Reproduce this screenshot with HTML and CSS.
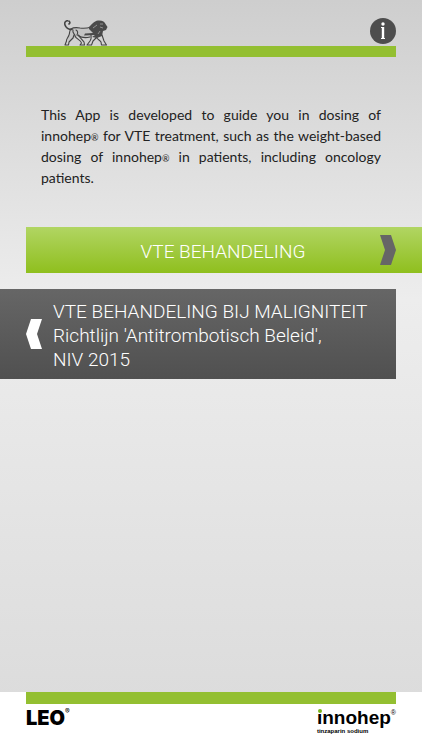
FILE: index.html
```html
<!DOCTYPE html>
<html lang="nl">
<head>
    <meta charset="UTF-8">
    <meta name="viewport" content="width=device-width, initial-scale=1.0">
    <title>innohep</title>
    <link rel="stylesheet" href="styles.css">
</head>
<body>

    <!-- Header -->
    <header class="header">
        <svg class="lion" viewBox="0 0 44 26" aria-hidden="true">
            <path d="M7 9C12 7 20 8.500 26 7L30 14L26 17C21 18 18 17 14 15.500L11 18L5 21L3 20L6 14Z" fill="#c4c4c4"/>
            <g fill="none" stroke="#444" stroke-width="1.100" stroke-linecap="round" stroke-linejoin="round">
                <path d="M8 9.500C5 9.500 2 8 1 5C0 2 2 .5 4 .8C6 1 6.500 3 5 4" stroke-width="1.600"/>
                <path d="M7 9C10 7 13 7.500 16 8C20 8.500 24 8 27 7"/>
                <path d="M7 9C5 11 6 13 5 15C4 18 2 19 2.500 21L1 25H4.500L5 22L9 18L10 15"/>
                <path d="M9 10C8 13 11 14 11 16C12 19 17 20 17.500 23L16 25H20.500L20 22C18 19 15 17 14.500 15"/>
                <path d="M14 15.500C18 18 22 18 26 17M12 10C14 11 14 13 13 15"/>
                <path d="M27 15C27 18 28 18 26 21L23 25H27.500L29 21L33 17"/>
                <path d="M32 17C34 20 36 20 37 22L37.500 25H42.500L40 21L38 15"/>
            </g>
            <path d="M25 7C27 5 30 1 34 .5C38 0 41 2 41.500 4L43.500 7L42 10L39 11L38 16L33 18L28 17L31 15L20 15.500L21 13.500L29 13L25 9Z" fill="#4a4a4a"/>
            <path d="M36 4L39 4M36 7L39 8M29 8L33 5M34 14L36 11" stroke="#a5a5a5" stroke-width=".8" fill="none"/>
        </svg>
        <button class="info" type="button" aria-label="Info">
            <svg viewBox="0 0 26 26" aria-hidden="true">
                <circle cx="13" cy="13" r="13" fill="#4d4d4d"/>
                <circle cx="13" cy="6" r="1.700" fill="#fff"/>
                <path d="M11 9H14.200V20H15V21H11V20H11.800V10H11Z" fill="#fff"/>
            </svg>
        </button>
    </header>

    <main class="content">
        <p class="intro">This App is developed to guide you in dosing of innohep<span class="reg">®</span> for VTE treatment, such as the weight-based dosing of innohep<span class="reg">®</span> in patients, including oncology patients.</p>

        <!-- Menu -->
        <nav class="menu">
            <a class="item item-green" href="#behandeling">
                <span class="label">VTE BEHANDELING</span>
                <svg class="arrow" viewBox="0 0 16 30" aria-hidden="true"><path d="M0 0H11L16 15L11 30H0L5 15Z" fill="#666"/></svg>
            </a>
            <a class="item item-dark" href="#maligniteit">
                <svg class="arrow" viewBox="0 0 16 30" aria-hidden="true"><path d="M16 0H5L0 15L5 30H16L11 15Z" fill="#fff"/></svg>
                <span class="label">VTE BEHANDELING BIJ MALIGNITEIT<br>Richtlijn 'Antitrombotisch Beleid',<br>NIV 2015</span>
            </a>
        </nav>
    </main>

    <!-- Footer -->
    <footer class="footer">
        <div class="logos">
            <div class="leo">LEO<span class="mark">®</span></div>
            <div class="innohep">
                <div class="brand"><span class="name">ınnohep</span><span class="mark">®</span></div>
                <div class="generic">tinzaparin sodium</div>
            </div>
        </div>
    </footer>

</body>
</html>
```
FILE: styles.css
```css
* {
    box-sizing: border-box;
}

body {
    margin: 0;
    min-height: 100vh;
    display: flex;
    flex-direction: column;
    font-family: Lato, "Open Sans", sans-serif;
    color: #222;
    background: linear-gradient(#cecece, #ededed 40%, #dcdcdc 93%);
}

.header {
    display: flex;
    justify-content: space-between;
    align-items: flex-end;
    margin: 0 26px;
    padding: 18px 0 0 38px;
    border-bottom: 11px solid #93bf31;
}

.lion {
    width: 44px;
    height: 26px;
}

.info {
    width: 26px;
    height: 26px;
    margin-bottom: 2px;
    padding: 0;
    border: none;
    background: none;
    cursor: pointer;
}

.info svg {
    display: block;
}

.content {
    flex: 1;
}

.intro {
    margin: 47px 41px 39px;
    font-size: 14px;
    line-height: 21px;
    text-align: justify;
}

.reg {
    font-size: 9px;
    line-height: 1;
}

.menu {
    display: flex;
    flex-direction: column;
    gap: 16px;
}

.item {
    display: flex;
    align-items: center;
    font-family: Roboto, sans-serif;
    font-size: 19px;
    font-weight: 300;
    line-height: 24px;
    color: #fff;
    text-decoration: none;
}

.item-green {
    margin-left: 26px;
    padding: 8px 26px 8px 0;
    background: linear-gradient(#b1d563, #8fbf1e);
}

.item-dark {
    gap: 11px;
    margin-right: 26px;
    padding: 7px 0 7px 26px;
    background: linear-gradient(#666, #505050);
}

.label {
    padding-top: 4px;
}

.item-green .label {
    flex: 1;
    padding-left: 40px;
    text-align: center;
}

.arrow {
    flex: none;
    width: 16px;
    height: 30px;
}

.footer {
    padding: 0 26px;
    background: #fff;
}

.logos {
    display: flex;
    justify-content: space-between;
    height: 58px;
    border-top: 12px solid #93bf31;
    color: #000;
}

.leo {
    display: flex;
    padding-top: 3px;
    font-family: Inter, sans-serif;
    font-size: 20px;
    font-weight: 900;
    line-height: 22px;
}

.mark {
    font-size: 7px;
    font-weight: 400;
    line-height: 10px;
}

.innohep {
    padding-top: 4px;
    font-family: "Liberation Sans", Arial, sans-serif;
    font-weight: 700;
}

.brand {
    display: flex;
    font-size: 19px;
    line-height: 20px;
}

.name {
    position: relative;
}

.name::before {
    content: "";
    position: absolute;
    top: 1px;
    left: 1px;
    width: 4px;
    height: 4px;
    border-radius: 50%;
    background: #7ab51d;
}

.generic {
    font-size: 6px;
    line-height: 7px;
}
```
